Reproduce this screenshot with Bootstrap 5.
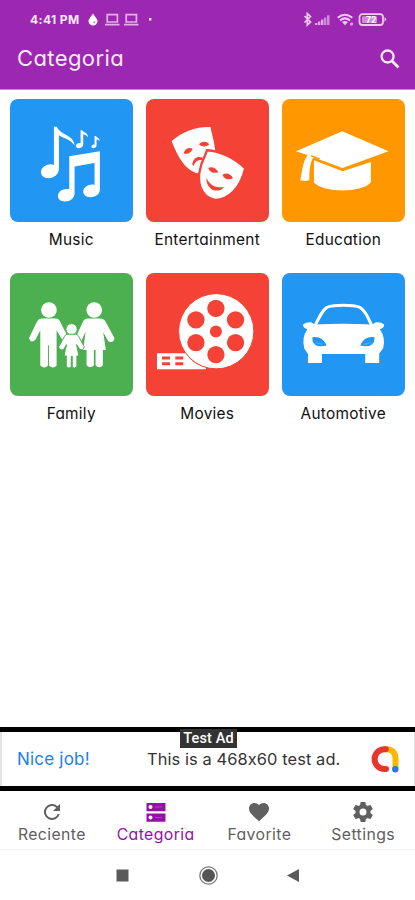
<!DOCTYPE html>
<html lang="es">
<head>
<meta charset="utf-8">
<meta name="viewport" content="width=device-width, initial-scale=1">
<title>Categoria</title>
<link href="https://cdn.jsdelivr.net/npm/bootstrap@5.3.0/dist/css/bootstrap.min.css" rel="stylesheet">
<style>
body{font-family:Inter,"Open Sans",sans-serif;font-feature-settings:"cv11","ss03","calt" 0;background:#fff;color:#111;height:900px;overflow:hidden}
svg{display:block;flex:none}
.app-top{background:#9c27b0;height:90px;border-bottom:1px solid #c583d2;color:#fbe9fd}
.status{height:38px;padding:1px 26px 0 30px;font-size:12px;font-weight:700}
.clock{width:50px;letter-spacing:.4px;white-space:nowrap}
.laptops{margin-left:7px}
.dot{margin-left:9px}
.title-row{height:40px;padding:0 14px 0 17px}
.title-row h1{font-size:22px;font-weight:400;letter-spacing:.4px}
.cats{display:grid;grid-template-columns:repeat(3,122.5px);column-gap:13.5px;grid-auto-rows:174px;padding:9px 10px 0}
.tile{height:122.5px;border-radius:8px;overflow:hidden}
.tile svg{width:100%;height:100%}
.blue{background:#2196f3}.red{background:#f44336}.orange{background:#ff9800}.green{background:#4caf50}
.cat-name{font-size:15.4px;line-height:20px;margin-top:8px;letter-spacing:.28px;white-space:nowrap}
.ad{height:64px;border:solid #000;border-width:5px 0;padding:0 16px 0 17px;font-size:17px;box-shadow:inset 2px 0 #dfe3e5,inset -1px 0 #dfe3e5}
.ad-tag{left:180px;top:-3px;width:57px;height:19px;background:#333;color:#fff;font:500 14.5px/20px Roboto,sans-serif;letter-spacing:.1px}
.ad-cta{color:#1a7ff0;width:130px;letter-spacing:.2px;padding-top:2px;font-feature-settings:"calt" 0}
.ad-copy{color:#333;flex:1;white-space:nowrap;font-size:16.4px;letter-spacing:.1px;padding-top:1px;font-feature-settings:"calt" 0}
.tabs{height:59px;border-bottom:1px solid #f1f1f1;color:#606060;font-size:15.8px;letter-spacing:.4px}
.tabs>div{width:25%;padding-top:9px}
.tabs span{line-height:19px;margin-top:1px;white-space:nowrap}
.tabs .on{color:#9510a5}
.sysnav{height:50px;color:#555}
</style>
<script src="https://cdn.jsdelivr.net/npm/bootstrap@5.3.0/dist/js/bootstrap.bundle.min.js"></script>
</head>
<body class="d-flex flex-column">
<header class="app-top flex-shrink-0">
  <div class="status d-flex align-items-center">
    <span class="clock">4:41 PM</span>
    <svg class="ms-2" width="10" height="13" viewBox="0 0 10 13"><path d="M5 .5C6.500 3.500 9.500 5.500 9.500 8.300a4.500 4.200 0 0 1-9 0C.5 5.500 3.500 3.500 5 .5z" fill="#fff"/><circle cx="6.300" cy="9.300" r="1" fill="#c77ad3"/></svg>
    <svg class="laptops" width="34" height="13" viewBox="0 0 34 13" fill="none" stroke="#e3b0ea" stroke-width="1.700"><path d="M2.200 1.700h10.200v7.300h-10.200zM0 11.600h14.500M21.200 1.700h10.200v7.300h-10.200zM19 11.600h14.500"/></svg>
    <svg class="dot" width="5" height="5" viewBox="0 0 5 5"><rect x="1" y="1" width="2.400" height="2.400" fill="#fff"/></svg>
    <svg class="ms-auto" width="86" height="15" viewBox="0 0 86 15">
      <path d="M1.500 4l6 6-3.200 3V1.500l3.200 3-6 6" fill="none" stroke="#efc9f4" stroke-width="1.700"/>
      <g fill="#dfa8e7"><path d="M12 11h2.400v2H12zM15 9.500h2.400V13H15zM18 7.500h2.400V13H18z"/><path d="M21 5.500h2.400V13H21zM24 3.200h2.500V13H24z" fill="#cf8bd9"/></g>
      <g fill="none" stroke="#efc9f4" stroke-width="2"><path d="M34.700 5.800q7.300-6 14.600 0M37 8.500q5-4.200 10 0"/></g><path d="M39 10q3-2 6 0l-3 3.300z" fill="#efc9f4"/><circle cx="48.500" cy="12" r="1.700" fill="#d798e0"/>
      <rect x="56.500" y="2.200" width="23.500" height="10.800" rx="3" fill="none" stroke="#efc9f4" stroke-width="1.800"/><path d="M81.500 5.200q3.500 2 0 4.600z" fill="#efc9f4"/>
      <rect x="59" y="4.300" width="15" height="6.600" rx="1" fill="#cf8bd9"/><text x="63" y="10.800" font-size="8.500" font-weight="700" fill="#fff">72</text>
    </svg>
  </div>
  <div class="title-row d-flex align-items-center justify-content-between">
    <h1 class="m-0">Categoria</h1>
    <svg width="22" height="22" viewBox="0 0 22 22" fill="none" stroke="#fcecff" stroke-width="2.300"><circle cx="8.600" cy="9.500" r="6"/><path d="M13 14l6.500 6.500" stroke-width="2.800"/></svg>
  </div>
</header>

<main class="cats flex-grow-1 align-content-start">
  <div class="text-center"><div class="tile blue"><svg viewBox="30 27 368 368" fill="#fff">
    <path d="M162 110h8c12 26 53 24 54 57-12-19-31-21-47-31v100c0 17-14 29-32 29-14 0-23-9-22-20 1-15 24-26 39-20z"/>
    <path d="M208 199l92-15v115c0 14-13 23-28 23-14 0-23-8-22-18 1-13 18-23 34-19v-66l-60 11v81c0 14-13 24-29 24-14 0-22-8-21-18 1-14 18-23 34-19z"/>
    <path d="M242 121h5c2 7 18 6 17 21-4-7-10-7-14-9v30c0 8-7 12-14 12-6 0-9-4-8-8 1-6 8-9 14-7zM284 138h4c2 5 12 6 11 16-3-5-7-5-9-6v18c0 6-5 9-10 9s-6-3-5-6c1-4 5-6 9-5z"/></svg></div><div class="cat-name">Music</div></div>

  <div class="text-center"><div class="tile red"><svg viewBox="24 27 368 368" fill="#fff">
    <path d="M101 153c35-29 72-43 117-42 3 20 10 37 13 65 7 45-12 66-50 75-42-12-63-54-80-98z"/>
    <g fill="#f44336"><path d="M137 190c4-14 16-19 27-14-3 13-15 19-27 14zM183 163c9-10 24-10 31 0-9 9-22 9-31 0z"/><path d="M163 224c2-20 16-27 31-21l2 8c-14-2-22 1-29 17z"/></g>
    <path d="M207 181c41 2 84 24 115 54-14 60-50 95-91 95-45-10-55-56-43-98 4-20 14-32 19-51z" stroke="#f44336" stroke-width="7"/>
    <g fill="#f44336"><path d="M211 234c9-6 25 0 30 13-11 5-26 0-30-13zM254 255c10-8 25-3 31 9-10 8-26 5-31-9zM205 264c13 25 32 31 54 27-14 19-53 15-54-27z"/></g></svg></div><div class="cat-name">Entertainment</div></div>

  <div class="text-center"><div class="tile orange"><svg viewBox="21 27 368 368" fill="#fff">
    <path d="M202 124l139 60-138 50-88-32 14-6-25-5-41-7z"/>
    <path d="M117 211l86 33 85-28v62c-29 32-142 32-171 0z"/>
    <path d="M62 184l44 2c11 2 17 5 24 9l-14 6c-12 18-13 44-13 70-9 3-18 3-27 0 5-26 8-58 22-76z"/><path d="M108 197l26 10" stroke="#ff9800" stroke-width="4"/></svg></div><div class="cat-name">Education</div></div>

  <div class="text-center"><div class="tile green"><svg viewBox="30 24 368 368" fill="#fff">
    <circle cx="147" cy="135" r="23.500"/><circle cx="283" cy="135" r="23.500"/>
    <path d="M127 161h40q10 0 14 10l22 43q-3 16-16 11l-17-29v106q-10 12-23 0v-61h-3v61q-10 12-23 0V196l-14 28q-14 13-20-4l22-46q6-13 18-13z"/>
    <path d="M264 161h37q12 0 17 11l26 48q-4 17-19 9l-15-27 8 53h-9v46q-10 13-22 0v-46h-5v46q-11 12-22 0v-46h-10l7-55-13 29q-14 8-18-8l22-48q5-12 16-12z"/>
    <g stroke="#4caf50" stroke-width="3"><circle cx="215" cy="193" r="17"/><path d="M204 208h22q7 0 10 6l17 31q-2 12-13 9l-10-15 7 34h-6v32q-7 8-14 2v-33h-3v33q-8 6-15-2v-32h-7l8-34-9 15q-11 5-15-8l18-32q3-6 10-6z"/></g></svg></div><div class="cat-name">Family</div></div>

  <div class="text-center"><div class="tile red"><svg viewBox="24 24 368 368" fill="#fff">
    <path d="M57 265h87q19 33 60 43v5H57z"/><circle cx="235" cy="199" r="113" stroke="#f44336" stroke-width="3"/>
    <g fill="#f44336"><circle cx="234" cy="130" r="26"/><circle cx="174" cy="165" r="26"/><circle cx="293" cy="165" r="26"/><circle cx="174" cy="233" r="26"/><circle cx="293" cy="233" r="26"/><circle cx="234" cy="269" r="26"/><circle cx="234" cy="200" r="18"/><path d="M72 275h24v9H72zM112 275h24v9h-24zM72 292h24v9H72zM112 292h24v9h-24z"/></g></svg></div><div class="cat-name">Movies</div></div>

  <div class="text-center"><div class="tile blue"><svg viewBox="21 24 368 368" fill="#fff">
    <path d="M120 183c14-29 21-45 36-56 22-8 77-8 99 0 16 11 23 28 36 56" fill="none" stroke="#fff" stroke-width="9"/>
    <path d="M119 179q87-5 173 0l11-7q17-1 25 7 0 11-13 14 18 25 10 57l-12 16v28h-42v-27H141v27H99v-27l-11-16q-9-32 9-58-13-3-13-14 8-8 25-7z"/>
    <g fill="#2196f3"><path d="M112 217q31-4 43 25-35 8-42-13zM299 217q-31-4-43 25 35 8 42-13z"/></g><path d="M122 232q10 6 22 6M289 232q-10 6-22 6" fill="none" stroke="#79bff8" stroke-width="2"/></svg></div><div class="cat-name">Automotive</div></div>
</main>

<section class="ad position-relative d-flex align-items-center flex-shrink-0">
  <span class="ad-tag position-absolute text-center">Test Ad</span>
  <span class="ad-cta">Nice job!</span><span class="ad-copy">This is a 468x60 test ad.</span>
  <svg width="28" height="28" viewBox="0 0 28 28" fill="none" stroke-width="6" stroke-linecap="round"><path d="M14.500 4.200H16c5 0 8.500 4 8.500 9V22" stroke="#fbb606"/><path d="M14.700 4.200h-1.200a9.900 9.900 0 0 0 0 19.800h1.500" stroke="#e5352c"/><circle cx="24.300" cy="24.200" r="3.200" fill="#2878e5"/></svg>
</section>

<nav class="tabs d-flex flex-shrink-0">
  <div class="d-flex flex-column align-items-center"><svg width="24" height="24" viewBox="0 0 24 24"><path d="M17.650 6.350A8 8 0 1 0 19.730 14h-2.080A6 6 0 1 1 12 6c1.660 0 3.140.69 4.220 1.780L13 11h7V4z" fill="currentColor"/></svg><span>Reciente</span></div>
  <div class="d-flex flex-column align-items-center on"><svg width="24" height="24" viewBox="0 0 24 24"><path d="M2.500 3h19v8.200h-19zM2.500 13.500h19v8.200h-19z" fill="currentColor"/><circle cx="6.500" cy="7" r="2" fill="#fff"/><circle cx="6.500" cy="17.500" r="2" fill="#fff"/><path d="M11 7h7M11 17.500h7" stroke="#b04bbd" stroke-width="1"/></svg><span>Categoria</span></div>
  <div class="d-flex flex-column align-items-center"><svg width="24" height="24" viewBox="0 0 24 24"><path d="M12 21.350l-1.450-1.320C5.400 15.360 2 12.280 2 8.500 2 5.420 4.420 3 7.500 3c1.740 0 3.410.81 4.500 2.090C13.090 3.810 14.760 3 16.500 3 19.580 3 22 5.420 22 8.500c0 3.780-3.400 6.860-8.550 11.540z" fill="currentColor"/></svg><span>Favorite</span></div>
  <div class="d-flex flex-column align-items-center"><svg width="24" height="24" viewBox="0 0 24 24"><path d="M19.430 12.980c.04-.32.07-.64.07-.98s-.03-.66-.07-.98l2.110-1.650c.19-.15.24-.42.12-.64l-2-3.460c-.12-.22-.39-.3-.61-.22l-2.490 1c-.52-.4-1.080-.73-1.690-.98l-.38-2.650A.49.49 0 0 0 14 2h-4c-.25 0-.46.18-.49.42l-.38 2.650c-.61.25-1.170.59-1.690.98l-2.490-1c-.23-.09-.49 0-.61.22l-2 3.460c-.13.22-.07.49.12.64l2.110 1.650c-.04.32-.07.65-.07.98s.03.66.07.98l-2.110 1.650c-.19.15-.24.42-.12.640l2 3.460c.12.22.39.3.61.22l2.490-1c.52.4 1.080.73 1.690.98l.38 2.650c.03.24.24.42.49.42h4c.25 0 .46-.18.49-.42l.38-2.650c.61-.25 1.170-.59 1.690-.98l2.490 1c.23.09.49 0 .61-.22l2-3.460c.12-.22.07-.49-.12-.64zM12 15.500a3.500 3.500 0 1 1 0-7 3.500 3.500 0 0 1 0 7z" fill="currentColor"/></svg><span>Settings</span></div>
</nav>
<footer class="sysnav flex-shrink-0 d-flex justify-content-center align-items-center">
  <svg width="188" height="22" viewBox="0 0 188 22"><path d="M2.500 5.500h12v12h-12z" fill="#5a5a5a"/><circle cx="94.500" cy="11.500" r="6.500" fill="#555"/><circle cx="94.500" cy="11.500" r="8.700" fill="none" stroke="#777" stroke-width="1.300"/><path d="M173 11.500l12-6.500v13z" fill="#5a5a5a"/></svg>
</footer>
</body>
</html>
